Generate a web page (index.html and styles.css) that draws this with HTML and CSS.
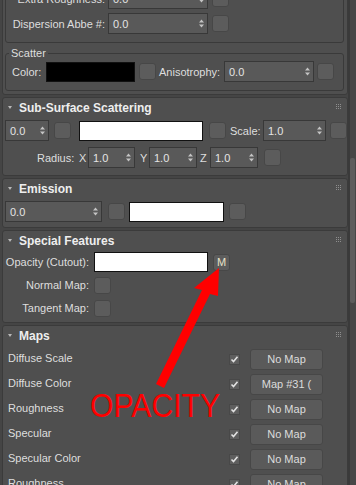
FILE: index.html
```html
<!DOCTYPE html>
<html>
<head>
<meta charset="utf-8">
<link rel="stylesheet" href="styles.css">
</head>
<body>
<div class="app">
  <div class="content">
    <div class="panel top">
      <div class="grp g1">
        <div class="row">
          <span class="lbl g1-lbl">Extra Roughness:</span>
          <div class="spin g1-spin"><span>0.0</span><svg class="arr" width="5" height="9" viewBox="0 0 5 9"><path d="M0 3.5h5L2.5 0.5z M0 5.5h5L2.5 8.5z"/></svg></div>
          <div class="sq g1-sq"></div>
        </div>
        <div class="row">
          <span class="lbl g1-lbl">Dispersion Abbe #:</span>
          <div class="spin g1-spin"><span>0.0</span><svg class="arr" width="5" height="9" viewBox="0 0 5 9"><path d="M0 3.5h5L2.5 0.5z M0 5.5h5L2.5 8.5z"/></svg></div>
          <div class="sq g1-sq"></div>
        </div>
      </div>
      <fieldset class="grp scatter">
        <legend>Scatter</legend>
        <div class="row">
          <span class="lbl c-lbl">Color:</span>
          <div class="swatch black c-sw"></div>
          <div class="sq c-sq"></div>
          <span class="lbl a-lbl">Anisotrophy:</span>
          <div class="spin a-spin"><span>0.0</span><svg class="arr" width="5" height="9" viewBox="0 0 5 9"><path d="M0 3.5h5L2.5 0.5z M0 5.5h5L2.5 8.5z"/></svg></div>
          <div class="sq a-sq"></div>
        </div>
      </fieldset>
    </div>

    <div class="panel">
      <div class="hdr"><span class="tri"></span><span class="title">Sub-Surface Scattering</span><svg class="grip" width="5" height="5" viewBox="0 0 5 5"><path d="M0 0h1v1H0zM2 0h1v1H2zM4 0h1v1H4zM0 2h1v1H0zM2 2h1v1H2zM4 2h1v1H4zM0 4h1v1H0zM2 4h1v1H2zM4 4h1v1H4z"/></svg></div>
      <div class="row s1">
        <div class="spin s1-spin"><span>0.0</span><svg class="arr" width="5" height="9" viewBox="0 0 5 9"><path d="M0 3.5h5L2.5 0.5z M0 5.5h5L2.5 8.5z"/></svg></div>
        <div class="sq s1-sq"></div>
        <div class="swatch white s1-sw"></div>
        <div class="sq s1-sq2"></div>
        <span class="lbl s1-lbl">Scale:</span>
        <div class="spin s1-spin2"><span>1.0</span><svg class="arr" width="5" height="9" viewBox="0 0 5 9"><path d="M0 3.5h5L2.5 0.5z M0 5.5h5L2.5 8.5z"/></svg></div>
        <div class="sq s1-sq3"></div>
      </div>
      <div class="row s2">
        <span class="lbl r-lbl">Radius:</span>
        <span class="lbl x-lbl">X</span>
        <div class="spin x-spin"><span>1.0</span><svg class="arr" width="5" height="9" viewBox="0 0 5 9"><path d="M0 3.5h5L2.5 0.5z M0 5.5h5L2.5 8.5z"/></svg></div>
        <span class="lbl y-lbl">Y</span>
        <div class="spin y-spin"><span>1.0</span><svg class="arr" width="5" height="9" viewBox="0 0 5 9"><path d="M0 3.5h5L2.5 0.5z M0 5.5h5L2.5 8.5z"/></svg></div>
        <span class="lbl z-lbl">Z</span>
        <div class="spin z-spin"><span>1.0</span><svg class="arr" width="5" height="9" viewBox="0 0 5 9"><path d="M0 3.5h5L2.5 0.5z M0 5.5h5L2.5 8.5z"/></svg></div>
        <div class="sq z-sq"></div>
      </div>
    </div>

    <div class="panel">
      <div class="hdr"><span class="tri"></span><span class="title">Emission</span><svg class="grip" width="5" height="5" viewBox="0 0 5 5"><path d="M0 0h1v1H0zM2 0h1v1H2zM4 0h1v1H4zM0 2h1v1H0zM2 2h1v1H2zM4 2h1v1H4zM0 4h1v1H0zM2 4h1v1H2zM4 4h1v1H4z"/></svg></div>
      <div class="row e1">
        <div class="spin e-spin"><span>0.0</span><svg class="arr" width="5" height="9" viewBox="0 0 5 9"><path d="M0 3.5h5L2.5 0.5z M0 5.5h5L2.5 8.5z"/></svg></div>
        <div class="sq e-sq"></div>
        <div class="swatch white e-sw"></div>
        <div class="sq e-sq2"></div>
      </div>
    </div>

    <div class="panel">
      <div class="hdr"><span class="tri"></span><span class="title">Special Features</span><svg class="grip" width="5" height="5" viewBox="0 0 5 5"><path d="M0 0h1v1H0zM2 0h1v1H2zM4 0h1v1H4zM0 2h1v1H0zM2 2h1v1H2zM4 2h1v1H4zM0 4h1v1H0zM2 4h1v1H2zM4 4h1v1H4z"/></svg></div>
      <div class="sf">
        <div class="row sf-row">
          <span class="lbl sf-lbl">Opacity (Cutout):</span>
          <div class="swatch white o-sw"></div>
          <div class="sq mbtn">M</div>
        </div>
        <div class="row sf-row">
          <span class="lbl sf-lbl">Normal Map:</span>
          <div class="sq sf-sq"></div>
        </div>
        <div class="row sf-row">
          <span class="lbl sf-lbl">Tangent Map:</span>
          <div class="sq sf-sq"></div>
        </div>
      </div>
    </div>

    <div class="panel">
      <div class="hdr"><span class="tri"></span><span class="title">Maps</span><svg class="grip" width="5" height="5" viewBox="0 0 5 5"><path d="M0 0h1v1H0zM2 0h1v1H2zM4 0h1v1H4zM0 2h1v1H0zM2 2h1v1H2zM4 2h1v1H4zM0 4h1v1H0zM2 4h1v1H2zM4 4h1v1H4z"/></svg></div>
      <div class="maps">
        <div class="row mrow"><span class="lbl m-lbl">Diffuse Scale</span><span class="chk"><svg width="9" height="9" viewBox="0 0 9 9"><path d="M1.5 4.5L3.5 6.5L7.5 1.8"/></svg></span><div class="mapbtn">No Map</div></div>
        <div class="row mrow"><span class="lbl m-lbl">Diffuse Color</span><span class="chk"><svg width="9" height="9" viewBox="0 0 9 9"><path d="M1.5 4.5L3.5 6.5L7.5 1.8"/></svg></span><div class="mapbtn">Map #31 (</div></div>
        <div class="row mrow"><span class="lbl m-lbl">Roughness</span><span class="chk"><svg width="9" height="9" viewBox="0 0 9 9"><path d="M1.5 4.5L3.5 6.5L7.5 1.8"/></svg></span><div class="mapbtn">No Map</div></div>
        <div class="row mrow"><span class="lbl m-lbl">Specular</span><span class="chk"><svg width="9" height="9" viewBox="0 0 9 9"><path d="M1.5 4.5L3.5 6.5L7.5 1.8"/></svg></span><div class="mapbtn">No Map</div></div>
        <div class="row mrow"><span class="lbl m-lbl">Specular Color</span><span class="chk"><svg width="9" height="9" viewBox="0 0 9 9"><path d="M1.5 4.5L3.5 6.5L7.5 1.8"/></svg></span><div class="mapbtn">No Map</div></div>
        <div class="row mrow"><span class="lbl m-lbl">Roughness</span><span class="chk"><svg width="9" height="9" viewBox="0 0 9 9"><path d="M1.5 4.5L3.5 6.5L7.5 1.8"/></svg></span><div class="mapbtn">No Map</div></div>
      </div>
    </div>
  </div>
  <div class="scrollbar"><div class="thumb"></div></div>
</div>

<svg class="annot" width="356" height="485" viewBox="0 0 356 485">
  <polygon points="156,384 202,290 194,288 219,268 218,296 210,294 164,388" fill="#ff0000"/>
  <text x="90" y="417" font-family="Liberation Sans, Arial, sans-serif" font-size="34" fill="#ff0000" textLength="130" lengthAdjust="spacingAndGlyphs">OPACITY</text>
</svg>
</body>
</html>
```

FILE: styles.css
```css
* { box-sizing: border-box; }

body {
  margin: 0;
  width: 356px;
  height: 485px;
  overflow: hidden;
  position: relative;
  background: #454545;
  font-family: "Liberation Sans", Arial, sans-serif;
  font-size: 11px;
  color: #dedede;
}

.app {
  display: flex;
  align-items: flex-start;
  height: 485px;
}

.content {
  width: 348px;
  padding-left: 2px;
  margin-top: -20px;
  display: flex;
  flex-direction: column;
  gap: 2px;
  flex: none;
}

.panel {
  background: #4f4f4f;
  border: 1px solid #3b3b3b;
  border-radius: 3px;
  width: 346px;
}

.panel.top {
  padding: 2px 0 3px 0;
}

.row {
  display: flex;
  align-items: center;
  height: 21px;
}

.lbl {
  white-space: nowrap;
  flex: none;
}

/* group boxes */
.grp {
  border: 1px solid #3a3a3a;
  border-radius: 3px;
  margin: 0 3px 0 2px;
}

.g1 {
  padding: 4px 0 8px 0;
  display: flex;
  flex-direction: column;
  gap: 4px;
}

.g1-lbl { width: 99px; text-align: right; }
.g1-spin { margin-left: 3px; width: 100px; }
.g1-sq { margin-left: 4px; }

.scatter {
  margin-top: 3px;
  padding: 0 0 8px 0;
  min-width: 0;
}

.scatter legend {
  margin-left: 3px;
  padding: 0 2px;
  line-height: 15px;
  height: 15px;
}

.c-lbl { margin-left: 6px; width: 34px; }
.c-sw { width: 89px; height: 19px; }
.c-sq { margin-left: 4px; }
.a-lbl { margin-left: 3px; width: 62px; }
.a-spin { margin-left: 3px; width: 90px; }
.a-sq { margin-left: 3px; }

/* controls */
.spin {
  flex: none;
  height: 21px;
  background: #595959;
  border: 1px solid #383838;
  display: flex;
  align-items: center;
  justify-content: space-between;
  padding: 0 3px 0 4px;
  color: #e4e4e4;
}

.arr { fill: #c4c4c4; display: block; }

.sq {
  flex: none;
  width: 17px;
  height: 17px;
  background: #5c5c5c;
  border: 1px solid #474747;
  border-radius: 3px;
}

.swatch {
  flex: none;
  height: 20px;
  border: 1px solid #111;
}
.swatch.black { background: #000; }
.swatch.white { background: #fff; }

/* headers */
.hdr {
  height: 19px;
  display: flex;
  align-items: center;
  padding-right: 6px;
}

.tri {
  margin-left: 5px;
  width: 0;
  height: 0;
  border-left: 2.5px solid transparent;
  border-right: 2.5px solid transparent;
  border-top: 3px solid #b8b8b8;
}

.title {
  margin-left: 7px;
  font-weight: bold;
  font-size: 12px;
  color: #eeeeee;
  flex: 1;
}

.grip {
  align-self: flex-start;
  margin-top: 6px;
  fill: #8e8e8e;
}

/* SSS */
.s1 { margin-top: 3px; }
.s1-spin { margin-left: 2px; width: 44px; }
.s1-sq { margin-left: 5px; }
.s1-sw { margin-left: 8px; width: 124px; }
.s1-sq2 { margin-left: 6px; }
.s1-lbl { margin-left: 4px; width: 30px; }
.s1-spin2 { margin-left: 3px; width: 63px; }
.s1-sq3 { margin-left: 4px; }

.s2 { margin-top: 6px; margin-bottom: 7px; }
.r-lbl { margin-left: 34px; width: 37px; }
.x-lbl { margin-left: 5px; width: 9px; }
.x-spin { margin-left: 0; width: 47px; }
.y-lbl { margin-left: 5px; width: 8px; }
.y-spin { margin-left: 1px; width: 48px; }
.z-lbl { margin-left: 3px; width: 9px; }
.z-spin { margin-left: 1px; width: 48px; }
.z-sq { margin-left: 6px; }

/* Emission */
.e1 { margin-top: 3px; margin-bottom: 5px; }
.e-spin { margin-left: 2px; width: 97px; }
.e-sq { margin-left: 6px; }
.e-sw { margin-left: 4px; width: 95px; }
.e-sq2 { margin-left: 5px; }

/* Special features */
.sf {
  margin-top: 2px;
  padding-bottom: 4px;
  display: flex;
  flex-direction: column;
  gap: 3px;
}
.sf-row { height: 20px; }
.sf-lbl { margin-left: 2px; width: 86px; text-align: right; padding-right: 2px; }
.o-sw { margin-left: 3px; width: 114px; }
.mbtn {
  margin-left: 5px;
  color: #e8e2c8;
  font-size: 11px;
  line-height: 15px;
  text-align: center;
}
.sf-sq { margin-left: 3px; }

/* Maps */
.maps {
  margin-top: 4px;
  display: flex;
  flex-direction: column;
  gap: 4px;
}
.m-lbl { margin-left: 5px; width: 221px; margin-top: -3px; }
.chk {
  flex: none;
  width: 11px;
  height: 11px;
  background: #5e5e5e;
  border: 1px solid #484848;
  display: flex;
  align-items: center;
  justify-content: center;
}
.chk svg {
  display: block;
  fill: none;
  stroke: #e2e2e2;
  stroke-width: 1.6;
}
.mapbtn {
  flex: none;
  margin-left: 10px;
  width: 73px;
  height: 21px;
  background: #5a5a5a;
  border: 1px solid #474747;
  border-radius: 3px;
  text-align: center;
  line-height: 19px;
  color: #dcdcdc;
}

/* scrollbar */
.scrollbar {
  flex: none;
  width: 8px;
  height: 485px;
  background: #474747;
  border-left: 2px solid #3a3a3a;
}
.thumb {
  margin-top: 158px;
  margin-left: 0;
  width: 5px;
  height: 145px;
  background: #5d5d5d;
  border-radius: 2px;
}

.annot {
  position: absolute;
  left: 0;
  top: 0;
  pointer-events: none;
}
```
